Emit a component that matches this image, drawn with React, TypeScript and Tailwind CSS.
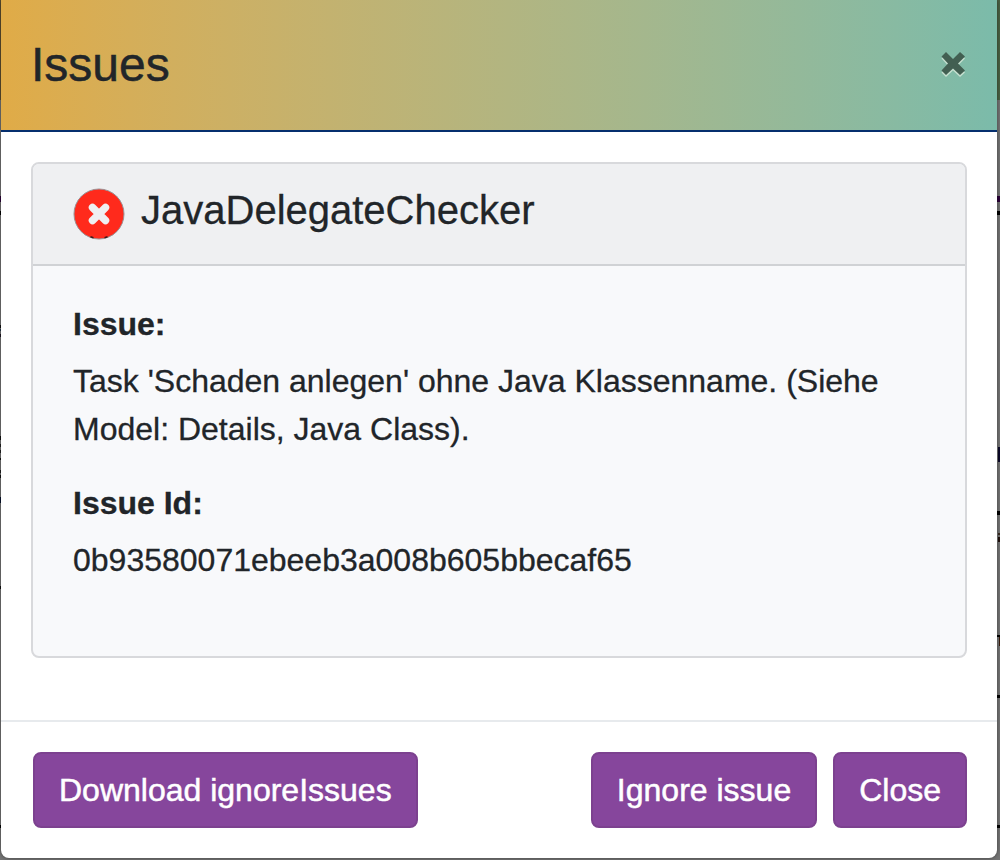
type Mark = { y: number; h: number; color: string; x?: number };

const leftMarks: Mark[] = [
  { y: 196, h: 6, color: '#2a0038' },
  { y: 211, h: 4, color: '#000000' },
  { y: 325, h: 3, color: '#111111' },
  { y: 329, h: 2, color: '#26394d' },
  { y: 334, h: 3, color: '#1b1420' },
  { y: 436, h: 4, color: '#111111' },
  { y: 444, h: 3, color: '#222222' },
  { y: 450, h: 3, color: '#222222' },
  { y: 458, h: 2, color: '#111111' },
  { y: 470, h: 3, color: '#222222' },
  { y: 475, h: 3, color: '#111111' },
  { y: 497, h: 6, color: '#06122b' },
  { y: 586, h: 3, color: '#111111' },
  { y: 825, h: 3, color: '#000000' },
];

const rightMarks: Mark[] = [
  { y: 196, h: 6, color: '#2a0038' },
  { y: 211, h: 4, color: '#000000' },
  { y: 447, h: 15, color: '#0b0828', x: 1 },
  { y: 511, h: 4, color: '#000000' },
  { y: 533, h: 2, color: '#3a2a20', x: 1 },
  { y: 537, h: 5, color: '#20100c', x: 1 },
  { y: 635, h: 2, color: '#000000' },
  { y: 637, h: 9, color: '#3a1c0c', x: 2 },
  { y: 695, h: 3, color: '#000000' },
  { y: 825, h: 3, color: '#000000' },
];

function Backdrop() {
  return (
    <div aria-hidden="true" className="absolute inset-0 overflow-hidden bg-[#747474]">
      <div className="h-[100px] bg-linear-to-r from-[#5c4e2f] to-[#4a6144]" />
      <svg className="absolute top-0 left-0" width="1" height="860">
        {leftMarks.map((m) => (
          <rect key={m.y} x={0} y={m.y} width={1} height={m.h} fill={m.color} />
        ))}
      </svg>
      <svg className="absolute top-0 right-0" width="3" height="860">
        {rightMarks.map((m) => (
          <rect key={m.y} x={m.x ?? 0} y={m.y} width={3} height={m.h} fill={m.color} />
        ))}
      </svg>
    </div>
  );
}

function CloseIcon() {
  const cross = 'M0.5 4.5L5 0L12 7L19 0L24 4.5L17 11.5L24 18.5L19 23L12 16.5L5 23L0.5 18.5L7 11.5Z';
  return (
    <svg width="24" height="26" viewBox="0 0 24 26" aria-hidden="true">
      <path d={cross} fill="#c5dfcf" transform="translate(0 2)" />
      <path d={cross} fill="#425f52" />
    </svg>
  );
}

function ErrorIcon() {
  return (
    <svg width="52" height="52" viewBox="0 0 52 52" className="shrink-0" aria-hidden="true">
      <circle cx="26" cy="26" r="25" fill="#ff2a1c" stroke="#9a9094" strokeWidth="1" />
      <path d="M17.5 48.8L20.5 49.8M31.5 49.8L34.5 48.8" stroke="#3d1a1a" strokeWidth="1.5" />
      <path
        d="M19.5 19.5L32.5 32.5M32.5 19.5L19.5 32.5"
        stroke="#eff0f2"
        strokeWidth="7.5"
        strokeLinecap="round"
      />
    </svg>
  );
}

const button =
  'h-[76px] cursor-pointer rounded-lg border-2 border-[#7c418f] bg-[#86469c] px-6 text-[32px] leading-[48px] text-white [-webkit-text-stroke:0.5px_white]';

export default function App() {
  return (
    <div className="relative min-h-screen pr-[3px] pb-[2px] pl-px font-['Liberation_Sans',Arial,sans-serif] text-[#212529]">
      <Backdrop />
      <div
        role="dialog"
        aria-labelledby="dialog-title"
        className="relative rounded-b-lg bg-white shadow-[0_0_4px_rgba(0,0,0,0.45)]"
      >
        <header className="flex items-center justify-between border-b-2 border-[#052f6e] bg-linear-to-r from-[#e0ab47] to-[#7bbbaa] py-[29px] pr-8 pl-[30px]">
          <h1
            id="dialog-title"
            className="text-[48px] leading-[72px] [-webkit-text-stroke:0.5px_#212529]"
          >
            Issues
          </h1>
          <button type="button" aria-label="Close dialog" className="cursor-pointer">
            <CloseIcon />
          </button>
        </header>

        <main className="px-[30px] pt-[30px] pb-[62px] [-webkit-text-stroke:0.3px_#212529]">
          <section className="overflow-hidden rounded-lg border-2 border-[#d8d9dc] bg-[#f8f9fb]">
            <div className="flex items-start gap-4 border-b-2 border-[#d0d2d5] bg-[#eff0f2] px-10 pt-6 pb-6">
              <ErrorIcon />
              <h2 className="text-[40px] leading-[44px]">JavaDelegateChecker</h2>
            </div>
            <div className="px-10 pt-[39px] pb-[72px] text-[32px] leading-[48px]">
              <h3 className="mb-[14px] leading-[38px] font-bold">Issue:</h3>
              <p className="mb-[31px]">
                Task 'Schaden anlegen' ohne Java Klassenname. (Siehe Model: Details, Java Class).
              </p>
              <h3 className="mb-[14px] leading-[38px] font-bold">Issue Id:</h3>
              <p className="break-words">0b93580071ebeeb3a008b605bbecaf65</p>
            </div>
          </section>
        </main>

        <footer className="flex flex-wrap gap-4 border-t-2 border-[#e7eaed] pt-[30px] pr-[30px] pb-[30px] pl-8">
          <button type="button" className={button + ' mr-auto'}>
            Download ignoreIssues
          </button>
          <button type="button" className={button}>
            Ignore issue
          </button>
          <button type="button" className={button}>
            Close
          </button>
        </footer>
      </div>
    </div>
  );
}
